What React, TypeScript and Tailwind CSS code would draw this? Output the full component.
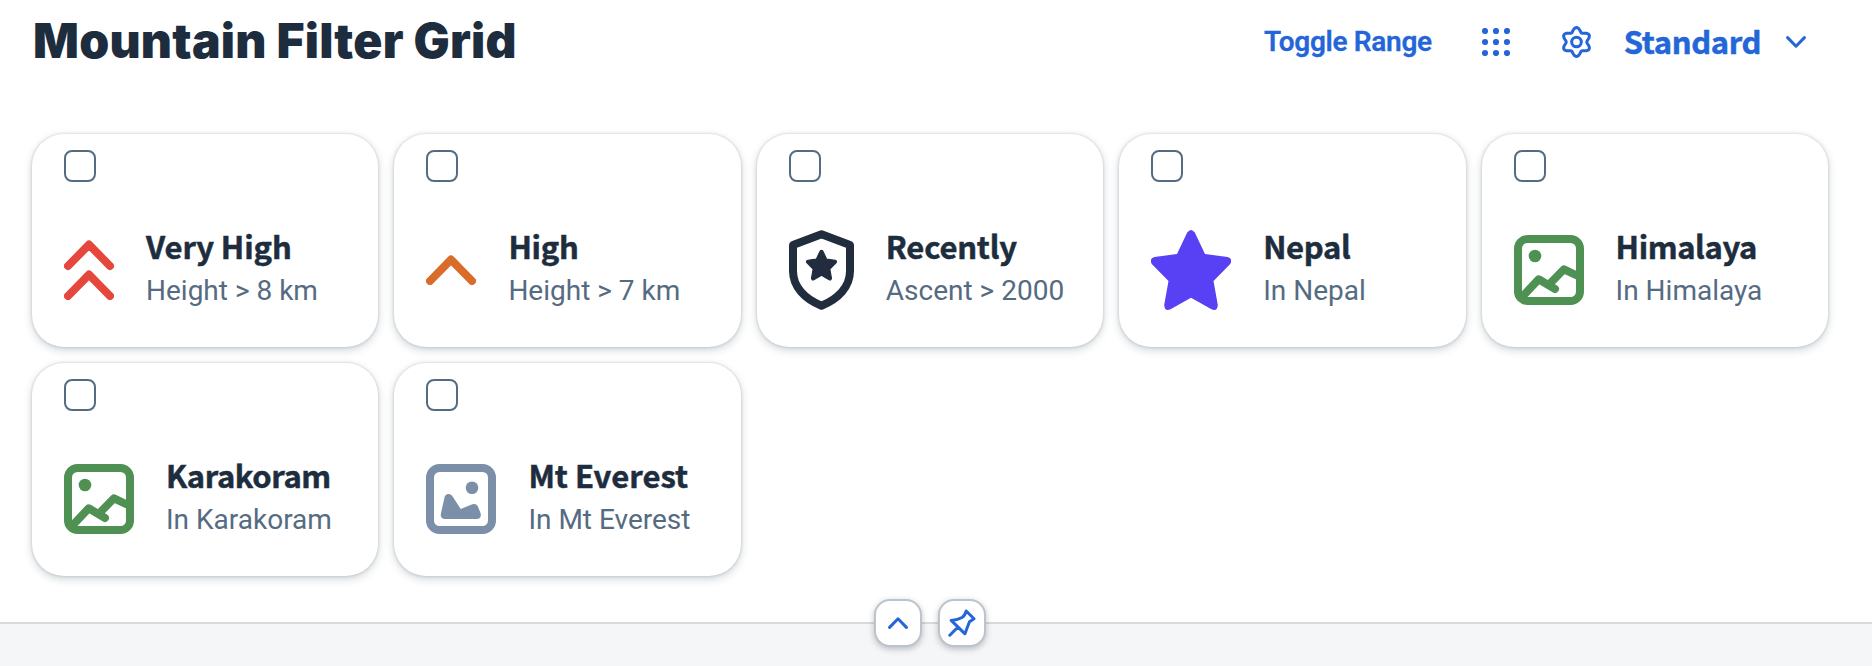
import type { ReactNode } from "react";

const STAR =
  "M36.2 2.6Q40 -2.6 43.8 2.6L54 24L76.5 27Q82.5 29 79 34.3L62.5 51L66.8 75Q66.5 81.8 60.5 79.3L40 67.7L19.5 79.3Q13.5 81.8 13.2 75L17.5 51L1 34.3Q-2.5 29 3.5 27L26 24Z";

// Six-lobed gear outline, sampled every five degrees with a lobe at the top.
const GEAR = Array.from({ length: 72 }, (_, i) => {
  const a = (i * 5 * Math.PI) / 180;
  const r = 12.4 + 2.1 * Math.cos(6 * a);
  return `${(15.5 + r * Math.sin(a)).toFixed(2)},${(16 - r * Math.cos(a)).toFixed(2)}`;
}).join(" ");

function DoubleChevronIcon() {
  return (
    <svg className="h-[60px] w-[50px] shrink-0" viewBox="0 0 50 60" fill="none" stroke="#e5473d" strokeWidth="8" strokeLinecap="round" strokeLinejoin="round">
      <path d="M4 26L25 4.6L46 26M4 56L25 34.6L46 56" />
    </svg>
  );
}

function ChevronIcon() {
  return (
    <svg className="h-[30px] w-[50px] shrink-0" viewBox="0 0 50 30" fill="none" stroke="#da6c2a" strokeWidth="8" strokeLinecap="round" strokeLinejoin="round">
      <path d="M4 26L25 4.6L46 26" />
    </svg>
  );
}

function ShieldIcon() {
  return (
    <svg className="h-20 w-[65px] shrink-0" viewBox="0 0 65 80" fill="none">
      <path d="M32.5 4.2L61 15V41C61 57 49 69 32.5 75.7C16 69 4 57 4 41V15Z" stroke="#212d3e" strokeWidth="8" strokeLinejoin="round" />
      <path d={STAR} fill="#212d3e" stroke="#212d3e" strokeWidth="3" strokeLinejoin="round" transform="translate(17.6 20.2) scale(.372)" />
    </svg>
  );
}

function StarIcon() {
  return (
    <svg className="size-20 shrink-0" viewBox="0 0 80 80" fill="#5840f5">
      <path d={STAR} />
    </svg>
  );
}

function LandscapeIcon() {
  return (
    <svg className="size-[70px] shrink-0" viewBox="0 0 70 70" fill="none" stroke="#4f9153" strokeWidth="8" strokeLinecap="round" strokeLinejoin="round">
      <rect x="4" y="4" width="62" height="62" rx="9.5" />
      <path d="M8 62L24.7 44.3L41 54M36 48.5L50 34.3L64 41" />
      <circle cx="21" cy="21" r="6.3" fill="#4f9153" stroke="none" />
    </svg>
  );
}

function PhotoIcon() {
  return (
    <svg className="size-[70px] shrink-0" viewBox="0 0 70 70" fill="#7b8fa8">
      <rect x="4" y="4" width="62" height="62" rx="9.5" fill="none" stroke="#7b8fa8" strokeWidth="8" />
      <circle cx="46" cy="23.7" r="6.3" />
      <path d="M18.6 33Q19.6 30 22.4 30Q25 30 26.3 32L34.7 45L46.3 40.2Q50 39 51.8 42.3L54.5 49Q56 55 50.5 55H18.5Q14.2 54.7 14.8 50Z" />
    </svg>
  );
}

type Item = { title: string; sub: string; track: string; icon: ReactNode };

const items: Item[] = [
  { title: "Very High", sub: "Height > 8 km", track: "tracking-[-0.1px]", icon: <DoubleChevronIcon /> },
  { title: "High", sub: "Height > 7 km", track: "tracking-[-0.3px]", icon: <ChevronIcon /> },
  { title: "Recently", sub: "Ascent > 2000", track: "tracking-[-0.2px]", icon: <ShieldIcon /> },
  { title: "Nepal", sub: "In Nepal", track: "tracking-[-0.3px]", icon: <StarIcon /> },
  { title: "Himalaya", sub: "In Himalaya", track: "tracking-[-0.4px]", icon: <LandscapeIcon /> },
  { title: "Karakoram", sub: "In Karakoram", track: "tracking-[-0.4px]", icon: <LandscapeIcon /> },
  { title: "Mt Everest", sub: "In Mt Everest", track: "tracking-[0px]", icon: <PhotoIcon /> },
];

function Card({ title, sub, track, icon }: Item) {
  return (
    <div className="h-[213px] rounded-[32px] bg-white px-8 pt-4 shadow-[0_0_3px_rgba(34,53,72,0.22),0_3px_8px_rgba(34,53,72,0.22)]">
      <div role="checkbox" aria-checked="false" className="size-8 rounded-lg border-2 border-[#556b82]" />
      <div className="mt-12 flex h-20 items-center gap-8">
        {icon}
        <div className="pb-[3px] whitespace-nowrap">
          <div className={`font-['Noto_Sans_CJK_SC',sans-serif] text-[31px] leading-10 font-bold text-[#1d2d3e] [-webkit-text-stroke:0.5px_#1d2d3e] ${track}`}>{title}</div>
          <div className="mt-[5px] font-[Roboto,sans-serif] text-[28px] leading-10 text-[#556b82]">{sub}</div>
        </div>
      </div>
    </div>
  );
}

export default function App() {
  return (
    <div className="flex h-[666px] flex-col overflow-hidden bg-white">
      <header className="flex h-[84px] items-center pr-[66px] pl-8 whitespace-nowrap text-[#2466d8]">
        <h1 className="mr-auto pb-[3px] pl-px font-[Inter,sans-serif] text-[48px] leading-[64px] font-black tracking-[0.25px] text-[#1d2d3e]">Mountain Filter Grid</h1>
        <span className="font-[Roboto,sans-serif] text-[28px] leading-10 font-semibold tracking-[-0.32px] [-webkit-text-stroke:0.3px_#2466d8]">Toggle Range</span>
        <svg className="ml-[50px] h-7 w-7" viewBox="0 0 28 28" fill="currentColor">
          {[3, 14, 25].map((y) => [3, 14, 25].map((x) => <circle key={`${x}-${y}`} cx={x} cy={y} r="3.1" />))}
        </svg>
        <svg className="ml-[51px] h-8 w-[31px]" viewBox="0 0 31 32" fill="none" stroke="currentColor" strokeWidth="3" strokeLinejoin="round">
          <polygon points={GEAR} />
          <circle cx="15.5" cy="16" r="4.8" />
        </svg>
        <span className="ml-[32px] pb-0.5 font-['Noto_Sans_CJK_SC',sans-serif] text-[31px] leading-10 font-bold tracking-[-0.38px] [-webkit-text-stroke:0.5px_#2466d8]">Standard</span>
        <svg className="ml-[25px] h-3 w-5" viewBox="0 0 20 12" fill="none" stroke="currentColor" strokeWidth="3" strokeLinecap="round" strokeLinejoin="round">
          <path d="M1.6 1.6L10 10.2L18.4 1.6" />
        </svg>
      </header>
      <main className="mt-[50px] grid w-[1860px] grid-cols-5 gap-4 px-8">
        {items.map((item) => (
          <Card key={item.title} {...item} />
        ))}
      </main>
      <footer className="relative mt-[46px] flex-1 border-t-2 border-[#d9d9d9] bg-[#f5f6f7]">
        <div className="absolute -top-[25px] left-[874px] flex gap-4 text-[#2466d8]">
          <button className="flex size-12 items-center justify-center rounded-2xl border-2 border-[#bcc3ca] bg-white shadow-[0_2px_6px_rgba(34,53,72,0.3)]">
            <svg className="h-3 w-5" viewBox="0 0 20 12" fill="none" stroke="currentColor" strokeWidth="3" strokeLinecap="round" strokeLinejoin="round">
              <path d="M1.6 10.4L10 1.8L18.4 10.4" />
            </svg>
          </button>
          <button className="flex size-12 items-center justify-center rounded-2xl border-2 border-[#bcc3ca] bg-white shadow-[0_2px_6px_rgba(34,53,72,0.3)]">
            <svg className="size-7" viewBox="0 0 28 28" fill="none" stroke="currentColor" strokeWidth="3" strokeLinecap="round" strokeLinejoin="round">
              <path d="M1.8 26.2L10 18M18.2 2L26 9.8L21.5 12.8Q19 19 17 24.8L3.2 11.4Q10 10.8 14 8.5Q17 6.5 18.2 2Z" />
            </svg>
          </button>
        </div>
      </footer>
    </div>
  );
}
